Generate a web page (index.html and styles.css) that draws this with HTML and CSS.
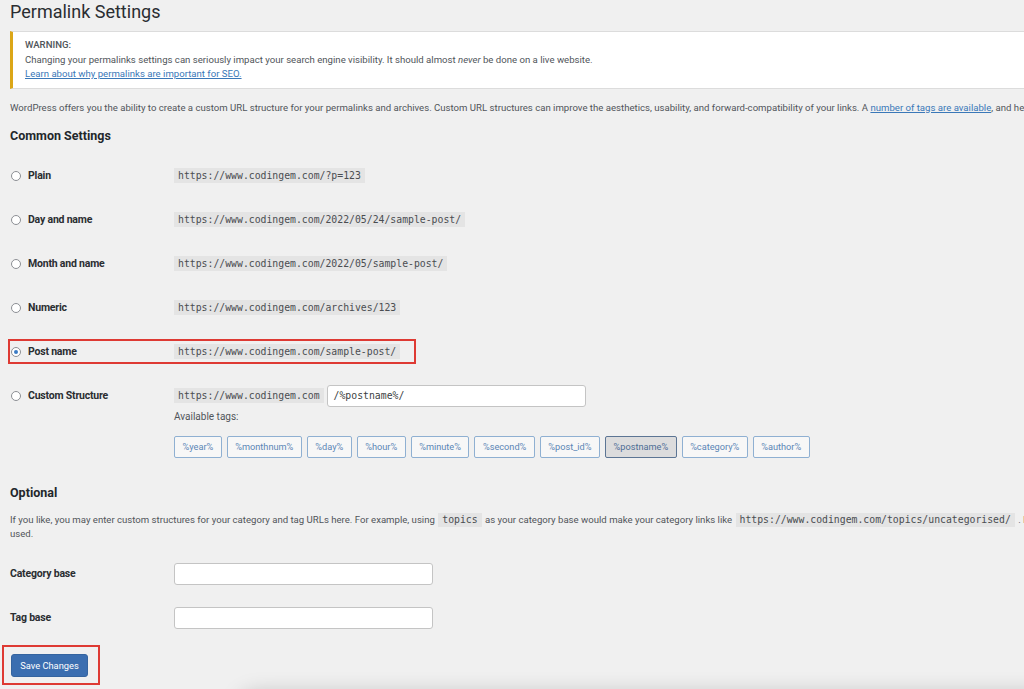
FILE: index.html
```html
<!DOCTYPE html>
<html lang="en">
<head>
<meta charset="utf-8">
<title>Permalink Settings</title>
<link rel="stylesheet" href="styles.css">
</head>
<body>
<div class="wrap">
  <h1 class="title">Permalink Settings</h1>

  <div class="notice">
    <p class="notice-head">WARNING:</p>
    <p>Changing your permalinks settings can seriously impact your search engine visibility. It should almost <em>never</em> be done on a live website.</p>
    <p><a href="#">Learn about why permalinks are important for SEO.</a></p>
  </div>

  <p class="intro">WordPress offers you the ability to create a custom URL structure for your permalinks and archives. Custom URL structures can improve the aesthetics, usability, and forward-compatibility of your links. A <a href="#">number of tags are available</a>, and here are some examples to get you started.</p>

  <h2 class="section">Common Settings</h2>

  <div class="options">
    <div class="row">
      <label class="label"><span class="radio"></span>Plain</label>
      <code class="code">https://www.codingem.com/?p=123</code>
    </div>
    <div class="row">
      <label class="label"><span class="radio"></span>Day and name</label>
      <code class="code">https://www.codingem.com/2022/05/24/sample-post/</code>
    </div>
    <div class="row">
      <label class="label"><span class="radio"></span>Month and name</label>
      <code class="code">https://www.codingem.com/2022/05/sample-post/</code>
    </div>
    <div class="row">
      <label class="label"><span class="radio"></span>Numeric</label>
      <code class="code">https://www.codingem.com/archives/123</code>
    </div>
    <div class="row row-marked">
      <label class="label"><span class="radio checked"></span>Post name</label>
      <code class="code">https://www.codingem.com/sample-post/</code>
    </div>
    <div class="row row-custom">
      <label class="label"><span class="radio"></span>Custom Structure</label>
      <div class="custom">
        <div class="custom-line">
          <code class="code">https://www.codingem.com</code>
          <div class="text-input wide mono">/%postname%/</div>
        </div>
        <div class="avail">Available tags:</div>
        <div class="tags">
          <span class="tag">%year%</span>
          <span class="tag">%monthnum%</span>
          <span class="tag">%day%</span>
          <span class="tag">%hour%</span>
          <span class="tag">%minute%</span>
          <span class="tag">%second%</span>
          <span class="tag">%post_id%</span>
          <span class="tag active">%postname%</span>
          <span class="tag">%category%</span>
          <span class="tag">%author%</span>
        </div>
      </div>
    </div>
  </div>

  <h2 class="section optional">Optional</h2>
  <p class="intro opt-text">If you like, you may enter custom structures for your category and tag URLs here. For example, using <code class="code">topics</code> as your category base would make your category links like <code class="code">https://www.codingem.com/topics/uncategorised/</code> . If you leave these blank the defaults will be<br>used.</p>

  <div class="options">
    <div class="row">
      <label class="label plain-label">Category base</label>
      <div class="text-input base"></div>
    </div>
    <div class="row">
      <label class="label plain-label">Tag base</label>
      <div class="text-input base"></div>
    </div>
  </div>

  <div class="submit">
    <button class="save" type="button">Save Changes</button>
  </div>
</div>
<div class="page-shadow"></div>
</body>
</html>
```

FILE: styles.css
```css
html, body {
  margin: 0;
  padding: 0;
  width: 1024px;
  height: 689px;
  overflow: hidden;
  background: #f0f0f0;
}

body {
  font-family: Roboto, "Liberation Sans", Arial, sans-serif;
  color: #3c3f43;
  position: relative;
}

.wrap {
  width: 1400px;
  padding-left: 10px;
}

.title {
  margin: 0;
  font-size: 18px;
  font-weight: 400;
  line-height: 24px;
  color: #2a2d31;
}

.notice {
  margin-top: 7px;
  background: #fff;
  border-left: 3px solid #dba617;
  border-top: 1px solid #dcdcdc;
  border-bottom: 1px solid #dcdcdc;
  padding: 6px 12px 6px 12px;
  font-size: 9.6px;
  line-height: 14.5px;
  color: #50555a;
}

.notice p {
  margin: 0;
}

.notice-head {
  font-weight: 500;
}

a {
  color: #3a78b8;
  text-decoration: underline;
}

.intro {
  margin: 12px 0 0;
  font-size: 9.6px;
  line-height: 14px;
  white-space: nowrap;
  color: #50555a;
}

.section {
  margin: 13px 0 0;
  font-size: 12.5px;
  font-weight: 700;
  line-height: 16px;
  color: #23272b;
}

.options {
  display: flex;
  flex-direction: column;
}

.row {
  display: flex;
  align-items: center;
  height: 44px;
}

.section + .options {
  margin-top: 10px;
}

.label {
  width: 164px;
  flex: none;
  display: flex;
  align-items: center;
  font-size: 10.5px;
  font-weight: 700;
  color: #2a2d31;
  letter-spacing: -0.2px;
}

.radio {
  width: 10px;
  height: 10px;
  border: 1px solid #8c8f94;
  border-radius: 50%;
  background: #fff;
  box-sizing: border-box;
  margin: 0 7px 0 1px;
  position: relative;
  flex: none;
}

.radio.checked::after {
  content: "";
  position: absolute;
  left: 2px;
  top: 2px;
  width: 4px;
  height: 4px;
  border-radius: 50%;
  background: #3a7bc4;
}

.code {
  font-family: "DejaVu Sans Mono", "Liberation Mono", monospace;
  font-size: 9.8px;
  line-height: 15px;
  background: #e4e4e4;
  padding: 0 4px;
  color: #4a4d51;
  display: inline-block;
}

.row-marked {
  position: relative;
}

.row-marked::after {
  content: "";
  position: absolute;
  left: -2px;
  top: 9px;
  width: 404px;
  height: 21px;
  border: 2px solid #de3a33;
  pointer-events: none;
}

.row-custom {
  height: auto;
  align-items: flex-start;
  padding-top: 11px;
}

.row-custom .label {
  height: 22px;
}

.custom {
  display: flex;
  flex-direction: column;
}

.custom-line {
  display: flex;
  align-items: center;
  gap: 3px;
}

.text-input {
  background: #fff;
  border: 1px solid #c4c4c4;
  border-radius: 3px;
  box-sizing: border-box;
  height: 22px;
}

.text-input.wide {
  width: 259px;
  padding-left: 6px;
  display: flex;
  align-items: center;
  font-size: 9.8px;
  color: #3c3f43;
}

.mono {
  font-family: "DejaVu Sans Mono", "Liberation Mono", monospace;
}

.avail {
  margin-top: 3px;
  font-size: 10px;
  line-height: 14px;
  color: #50555a;
}

.tags {
  display: flex;
  gap: 5px;
  margin-top: 12px;
}

.tag {
  display: inline-flex;
  align-items: center;
  justify-content: center;
  height: 22px;
  box-sizing: border-box;
  padding: 0 7.5px;
  border: 1px solid #8fb0d2;
  border-radius: 2px;
  background: #f7f7f7;
  font-size: 9.2px;
  color: #5b86b6;
}

.tag.active {
  background: #dcdcdd;
  border-color: #5c7594;
  color: #4d6d95;
}

.optional {
  margin-top: 27px;
}

.opt-text {
  margin-top: 12px;
}

.opt-text .code {
  line-height: 14px;
  padding: 0 4px;
  margin: 0 1px;
}

.opt-text + .options {
  margin-top: 11px;
}

.text-input.base {
  width: 259px;
}

.submit {
  margin-top: 14px;
  position: relative;
  width: 88px;
}

.submit::after {
  content: "";
  position: absolute;
  left: -8px;
  top: -9px;
  width: 94px;
  height: 36px;
  border: 2px solid #de3a33;
  pointer-events: none;
}

.save {
  display: block;
  margin-left: 1px;
  height: 23px;
  width: 77px;
  padding: 0;
  border: 1px solid #35649f;
  border-radius: 3px;
  background: #3b6eb0;
  color: #fff;
  font-family: Roboto, "Liberation Sans", Arial, sans-serif;
  font-size: 9.3px;
}

.page-shadow {
  position: absolute;
  left: 240px;
  right: -40px;
  top: 700px;
  height: 30px;
  border-radius: 40px;
  box-shadow: 0 -6px 22px rgba(0, 0, 0, 0.22);
  background: #d8d8d8;
}
```
